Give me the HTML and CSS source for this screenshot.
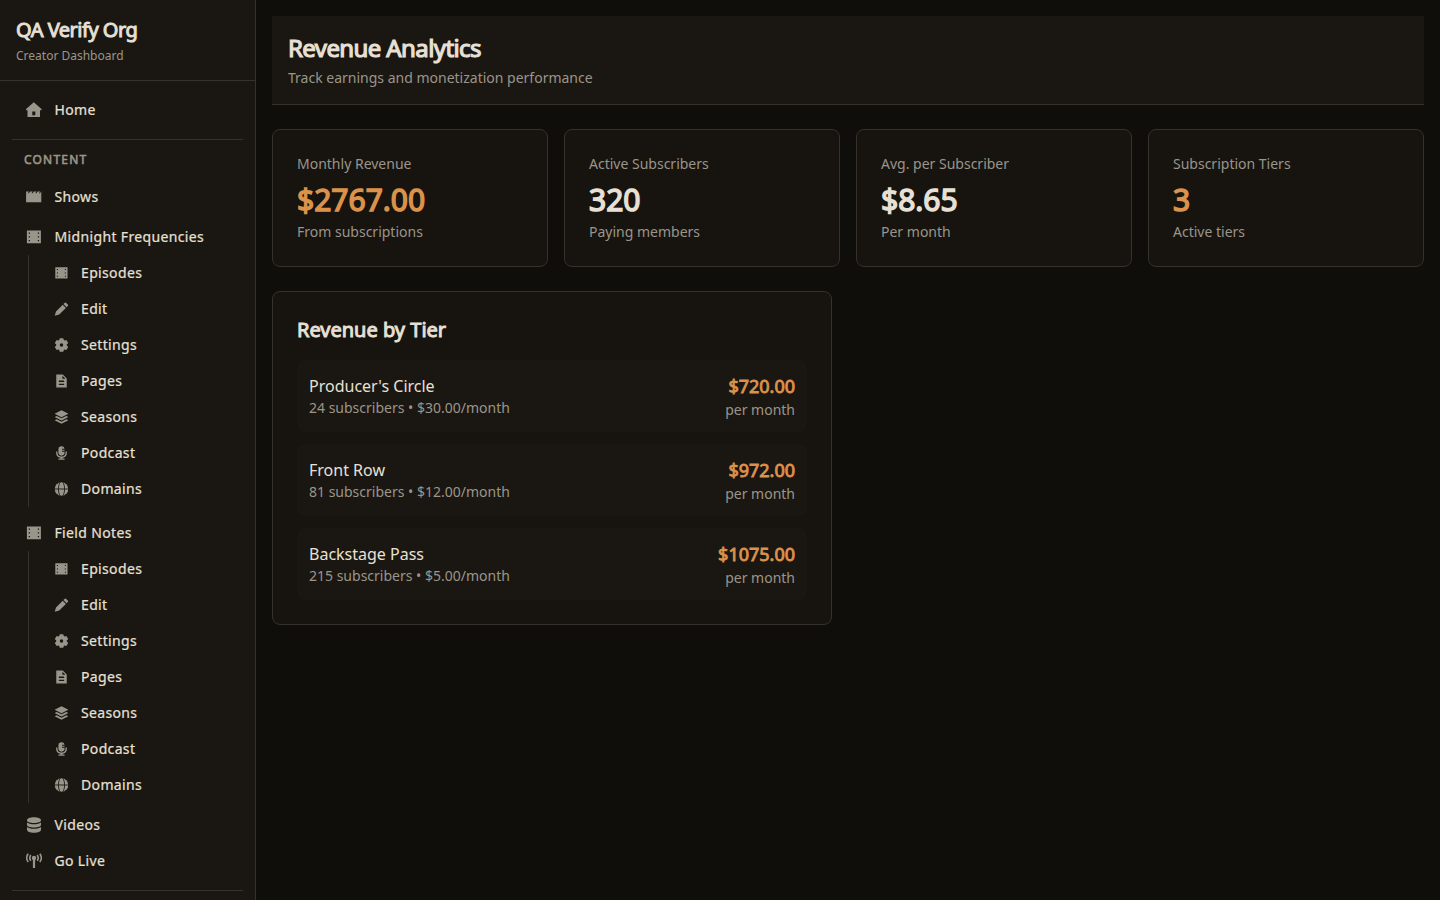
FILE: index.html
```
<!DOCTYPE html>
<html lang="en">
<head>
  <meta charset="UTF-8">
  <meta name="viewport" content="width=device-width, initial-scale=1.0">
  <title>Revenue Analytics</title>
  <link rel="stylesheet" href="styles.css">
</head>
<body>
  <!-- icon sprite -->
  <svg class="sprite" aria-hidden="true">
    <symbol id="i-home" viewBox="0 0 16 16"><path fill-rule="evenodd" d="M7.800.3 15.500 7V8.200H14V15H1.500V8.200H.1V7zM6.300 9.500V13.300H9.300V9.500z"/></symbol>
    <symbol id="i-clapper" viewBox="0 0 16 16"><path d="M.1 2.400H3L1.800 4.300H2.900L4.100 2.400H6.700L5.500 4.300H6.600L7.800 2.400H10.400L9.200 4.300H10.300L11.500 2.400H14.100L12.900 4.300H14L15.200 2.400H15.300V13.300H.1z"/></symbol>
    <symbol id="i-film" viewBox="0 0 16 16"><path fill-rule="evenodd" d="M.9 1.500H14.900V14.300H.9zM2.700 3.500V4.700H4V3.500zM2.700 7.300V8.500H4V7.300zM2.700 11V12.200H4V11zM11.800 3.500V4.700H13.100V3.500zM11.800 7.300V8.500H13.100V7.300zM11.800 11V12.200H13.100V11z"/></symbol>
    <symbol id="i-pencil" viewBox="0 0 16 16"><path d="M11.800.8a1 1 0 0 1 1.400 0l2.200 2.200a1 1 0 0 1 0 1.400L13.800 6 10.200 2.400zM9.400 3.200 13 6.800 5.400 14.400 .2 15.800 1.700 10.900z"/></symbol>
    <symbol id="i-gear" viewBox="0 0 16 16"><path fill-rule="evenodd" d="M5.900.2H10.100L10.500 2.400 11.400 2.900 13.500 2.200 15.700 5.800 14 7.300V8.700L15.700 10.200 13.500 13.800 11.400 13.100 10.500 13.600 10.100 15.800H5.900L5.500 13.600 4.600 13.100 2.500 13.800.3 10.200 2 8.700V7.300L.3 5.800 2.500 2.200 4.600 2.900 5.500 2.400zM8 6a2 2 0 1 0 0 4 2 2 0 0 0 0-4z"/></symbol>
    <symbol id="i-page" viewBox="0 0 16 16"><path fill-rule="evenodd" d="M2 .5H9.500L14 5V15.500H2zM9 2V5.500H12.500zM5 7.500V9H11V7.500zM5 11V12.500H11V11z"/></symbol>
    <symbol id="i-layers" viewBox="0 0 16 16"><path d="M8 .4 15.900 4.300 8 8.200.1 4.300zM2.500 6.900 8 9.500 13.500 6.900 15.900 8.100 8 11.900.1 8.100zM2.500 10.700 8 13.300 13.500 10.700 15.900 11.800 8 15.700.1 11.800z"/></symbol>
    <symbol id="i-mic" viewBox="0 0 16 16"><path d="M8 .3a3.500 3.500 0 0 1 3.500 2.700H8.500V4.200H11.500V5.500H8.500V6.700H11.500V7.500a3.500 3.500 0 0 1-7 0V3.800A3.500 3.500 0 0 1 8 .3zM1.800 6.200H3.400V7.500a4.600 4.600 0 0 0 9.200 0V6.200H14.200V7.500a6.200 6.200 0 0 1-5.300 6.100V14.300H11.500V15.800H4.500V14.300H7.100V13.600A6.200 6.200 0 0 1 1.800 7.500z"/></symbol>
    <symbol id="i-globe" viewBox="0 0 16 16"><circle cx="8" cy="8" r="7.800"/><path class="cut" d="M0 8H16M6.500.3C3.800 4 3.800 12 6.500 15.700M9.500.3C12.200 4 12.200 12 9.500 15.700"/></symbol>
    <symbol id="i-stack" viewBox="0 0 16 16"><path d="M8 .3c4 0 7 1.200 7 2.900S12 6 8 6 1 4.900 1 3.200 4 .3 8 .3zM1 5.500C2.500 6.700 5 7.300 8 7.300S13.500 6.700 15 5.500V7.700C15 9.400 12 10.500 8 10.500S1 9.400 1 7.700zM1 10C2.500 11.200 5 11.800 8 11.800S13.500 11.200 15 10V12.700C15 14.400 12 15.700 8 15.700S1 14.400 1 12.700z"/></symbol>
    <symbol id="i-live" viewBox="0 0 16 16"><circle cx="8" cy="5" r="2.200"/><path d="M6.900 5H9.100V15H6.900z"/><path class="line" d="M2.200.8C.3 3.300.3 6.500 2.200 9M4.800 2C3.600 3.700 3.600 6.100 4.800 7.800M13.800.8C15.700 3.300 15.700 6.500 13.800 9M11.200 2C12.400 3.700 12.400 6.100 11.200 7.800"/></symbol>
  </svg>

  <aside class="sidebar">
    <div class="brand">
      <h2>QA Verify Org</h2>
      <p>Creator Dashboard</p>
    </div>
    <nav class="nav">
      <a class="item"><svg><use href="#i-home"/></svg>Home</a>
      <hr>
      <h3>Content</h3>
      <a class="item shows"><svg><use href="#i-clapper"/></svg>Shows</a>
      <a class="item"><svg><use href="#i-film"/></svg>Midnight Frequencies</a>
      <div class="sub">
        <a class="item"><svg><use href="#i-film"/></svg>Episodes</a>
        <a class="item"><svg><use href="#i-pencil"/></svg>Edit</a>
        <a class="item"><svg><use href="#i-gear"/></svg>Settings</a>
        <a class="item"><svg><use href="#i-page"/></svg>Pages</a>
        <a class="item"><svg><use href="#i-layers"/></svg>Seasons</a>
        <a class="item"><svg><use href="#i-mic"/></svg>Podcast</a>
        <a class="item"><svg><use href="#i-globe"/></svg>Domains</a>
      </div>
      <a class="item next"><svg><use href="#i-film"/></svg>Field Notes</a>
      <div class="sub">
        <a class="item"><svg><use href="#i-film"/></svg>Episodes</a>
        <a class="item"><svg><use href="#i-pencil"/></svg>Edit</a>
        <a class="item"><svg><use href="#i-gear"/></svg>Settings</a>
        <a class="item"><svg><use href="#i-page"/></svg>Pages</a>
        <a class="item"><svg><use href="#i-layers"/></svg>Seasons</a>
        <a class="item"><svg><use href="#i-mic"/></svg>Podcast</a>
        <a class="item"><svg><use href="#i-globe"/></svg>Domains</a>
      </div>
      <a class="item"><svg><use href="#i-stack"/></svg>Videos</a>
      <a class="item"><svg><use href="#i-live"/></svg>Go Live</a>
      <hr>
    </nav>
  </aside>

  <main class="main">
    <header class="page-header">
      <h1>Revenue Analytics</h1>
      <p>Track earnings and monetization performance</p>
    </header>

    <section class="stats">
      <div class="card">
        <p>Monthly Revenue</p>
        <div class="value accent">$2767.00</div>
        <p>From subscriptions</p>
      </div>
      <div class="card">
        <p>Active Subscribers</p>
        <div class="value">320</div>
        <p>Paying members</p>
      </div>
      <div class="card">
        <p>Avg. per Subscriber</p>
        <div class="value">$8.65</div>
        <p>Per month</p>
      </div>
      <div class="card">
        <p>Subscription Tiers</p>
        <div class="value accent">3</div>
        <p>Active tiers</p>
      </div>
    </section>

    <section class="card tiers">
      <h2>Revenue by Tier</h2>
      <div class="tier">
        <div>
          <div class="name">Producer's Circle</div>
          <p>24 subscribers • $30.00/month</p>
        </div>
        <div class="amount">
          <div class="price accent">$720.00</div>
          <p>per month</p>
        </div>
      </div>
      <div class="tier">
        <div>
          <div class="name">Front Row</div>
          <p>81 subscribers • $12.00/month</p>
        </div>
        <div class="amount">
          <div class="price accent">$972.00</div>
          <p>per month</p>
        </div>
      </div>
      <div class="tier">
        <div>
          <div class="name">Backstage Pass</div>
          <p>215 subscribers • $5.00/month</p>
        </div>
        <div class="amount">
          <div class="price accent">$1075.00</div>
          <p>per month</p>
        </div>
      </div>
    </section>
  </main>
</body>
</html>
```
FILE: styles.css
```
* {
  box-sizing: border-box;
}
body {
  margin: 0;
  height: 100vh;
  display: flex;
  overflow: hidden;
  background: #0f0e0a;
  color: #e8e0d5;
  font-family: 'Noto Sans', sans-serif;
  font-size: 16px;
  line-height: 24px;
}
h1, h2, h3, p {
  margin: 0;
}
p {
  color: #9a958a;
  font-size: 14px;
  line-height: 20px;
}
.sprite {
  position: absolute;
  width: 0;
  height: 0;
}
.accent {
  color: #db924b;
}

/* regular cut thickened with a stroke */
h1, h2, h3, .value, .price {
  font-weight: 400;
  -webkit-text-stroke: 0.048em currentColor;
}

/* sidebar */
.sidebar {
  width: 256px;
  flex-shrink: 0;
  background: #1a1712;
  border-right: 1px solid #35322b;
}
.brand {
  padding: 16px;
  border-bottom: 1px solid #35322b;
}
h2 {
  font-size: 20px;
  line-height: 28px;
}
.brand h2 {
  letter-spacing: -0.5px;
}
.brand p {
  margin-top: 4px;
  font-size: 12px;
  line-height: 16px;
}
.nav {
  padding: 11px 12px;
}
.nav hr {
  height: 1px;
  margin: 11px 0;
  border: 0;
  background: #35322b;
}
.nav h3 {
  padding: 0 12px;
  color: #9a958a;
  font-size: 12px;
  line-height: 18px;
  letter-spacing: 1.2px;
  text-transform: uppercase;
}
.item {
  display: flex;
  align-items: center;
  gap: 12.5px;
  height: 36px;
  padding: 0 14px;
  font-size: 14px;
  letter-spacing: 0.35px;
  -webkit-text-stroke: 0.2px currentColor;
}
.item svg {
  width: 16px;
  height: 16px;
  overflow: visible;
  fill: #9a958a;
  -webkit-text-stroke: 0;
}
.shows {
  margin: 10px 0 4px;
}
.next {
  margin-top: 8px;
}
.sub {
  margin: 0 0 4px 16px;
  border-left: 1px solid #35322b;
}
.sub .item {
  gap: 13px;
  padding-left: 25px;
}
.sub svg {
  width: 14px;
  height: 14px;
}
.sub use {
  transform: translateX(0.5px);
}
.cut {
  fill: none;
  stroke: #1a1712;
  stroke-width: 1;
}
.line {
  fill: none;
  stroke: #9a958a;
  stroke-width: 1.6;
}

/* main */
.main {
  flex: 1;
  padding: 16px;
}
.page-header {
  padding: 16px;
  margin-bottom: 24px;
  background: #1a1712;
  border-bottom: 1px solid #35322b;
}
h1 {
  font-size: 24px;
  line-height: 32px;
  letter-spacing: -0.6px;
}
.page-header p {
  margin-top: 4px;
}
.stats {
  display: grid;
  grid-template-columns: repeat(4, 1fr);
  gap: 16px;
  margin-bottom: 24px;
}
.card {
  padding: 24px;
  background: #171410;
  border: 1px solid #35322b;
  border-radius: 8px;
}
.value {
  margin: 8px 0 4px;
  font-size: 30px;
  line-height: 36px;
}
.tiers {
  width: 560px;
}
.tiers h2 {
  margin-bottom: 16px;
}
.tier {
  display: flex;
  align-items: center;
  justify-content: space-between;
  padding: 12px;
  background: #1a1712;
  border-radius: 8px;
}
.tier + .tier {
  margin-top: 12px;
}
.amount {
  text-align: right;
}
.price {
  font-size: 18px;
  line-height: 28px;
}
```
